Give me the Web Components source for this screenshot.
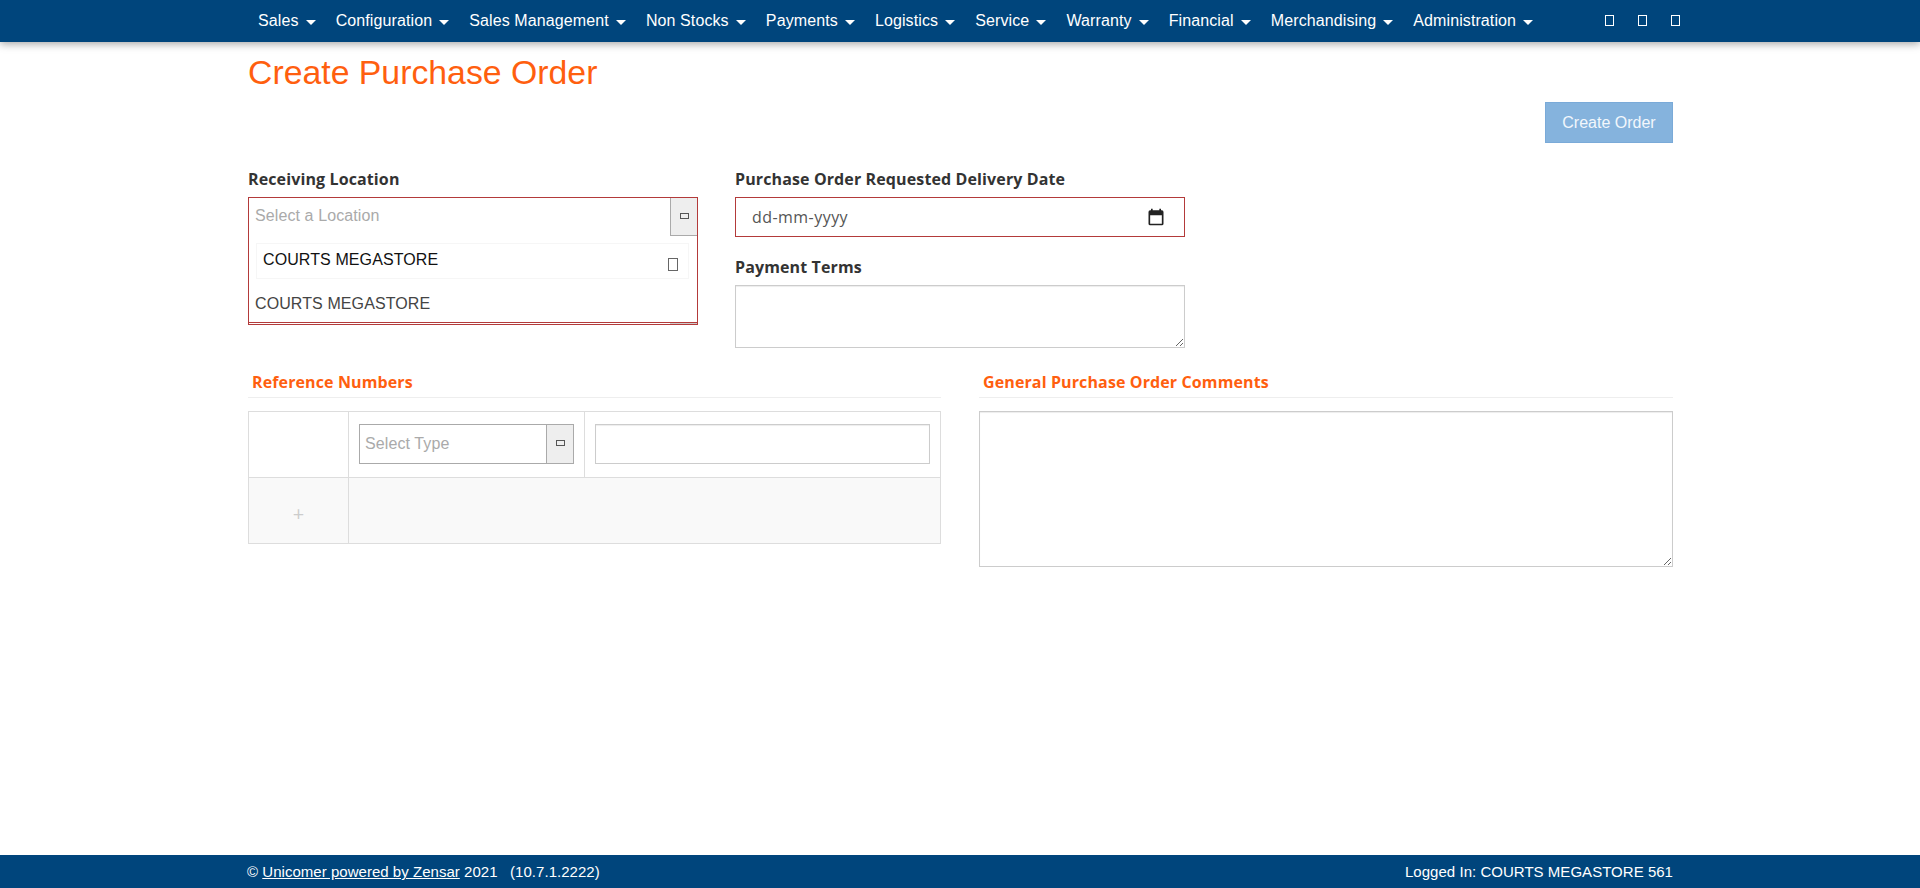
<!DOCTYPE html>
<html lang="en">
<head>
<meta charset="utf-8">
<title>Create Purchase Order</title>
<style>
  html, body { margin: 0; padding: 0; height: 100%; background: #fff; }
  body { font-family: "Liberation Sans", Arial, sans-serif; font-size: 16px; color: #333; display: flex; flex-direction: column; height: 888px; overflow: hidden; }
  app-footer a { color: #fff; text-decoration: underline; }
</style>
</head>
<body>
<template id="tofu-tpl">
  <style>
    :host { display: inline-block; flex: none; width: var(--w, 9px); height: var(--h, 11px); box-sizing: border-box; border: 1px solid currentColor; }
  </style>
</template>

<app-nav>
  <nav-item>Sales</nav-item>
  <nav-item>Configuration</nav-item>
  <nav-item>Sales Management</nav-item>
  <nav-item>Non Stocks</nav-item>
  <nav-item>Payments</nav-item>
  <nav-item>Logistics</nav-item>
  <nav-item>Service</nav-item>
  <nav-item>Warranty</nav-item>
  <nav-item>Financial</nav-item>
  <nav-item>Merchandising</nav-item>
  <nav-item>Administration</nav-item>
</app-nav>

<po-page></po-page>

<app-footer>
  <span slot="left">© <a href="#">Unicomer powered by Zensar</a> 2021 &nbsp; (10.7.1.2222)</span>
  <span slot="right">Logged In: COURTS MEGASTORE 561</span>
</app-footer>

<script>
class TofuIcon extends HTMLElement {
  constructor() {
    super();
    this.attachShadow({ mode: 'open' });
    this.shadowRoot.appendChild(document.getElementById('tofu-tpl').content.cloneNode(true));
  }
}
customElements.define('tofu-icon', TofuIcon);

class NavItem extends HTMLElement {
  constructor() {
    super();
    this.attachShadow({ mode: 'open' });
    this.shadowRoot.innerHTML = `
      <style>
        :host { display: flex; align-items: center; padding: 0 10px; height: 42px; color: #fff; white-space: nowrap; letter-spacing: .1px; }
        .caret { width: 0; height: 0; margin-left: 7.15px; margin-top: 2px; border-top: 5px solid #fff; border-left: 5px solid transparent; border-right: 5px solid transparent; }
      </style>
      <slot></slot><span class="caret"></span>
    `;
  }
}
customElements.define('nav-item', NavItem);

class AppNav extends HTMLElement {
  constructor() {
    super();
    this.attachShadow({ mode: 'open' });
    this.shadowRoot.innerHTML = `
      <style>
        :host { display: block; flex: none; height: 42px; background: #00457c; box-shadow: 0 2px 8px rgba(0,0,0,0.35); position: relative; z-index: 2; font: 16px "Liberation Sans", Arial, sans-serif; }
        .inner { display: flex; justify-content: space-between; margin: 0 232px 0 248px; height: 42px; }
        .menu { display: flex; }
        .tools { display: flex; align-items: center; gap: 24px; padding-bottom: 1px; color: #fff; width: 83px; }
      </style>
      <div class="inner">
        <div class="menu"><slot></slot></div>
        <div class="tools"><tofu-icon></tofu-icon><tofu-icon></tofu-icon><tofu-icon></tofu-icon></div>
      </div>
    `;
  }
}
customElements.define('app-nav', AppNav);

class FieldLabel extends HTMLElement {
  constructor() {
    super();
    this.attachShadow({ mode: 'open' });
    this.shadowRoot.innerHTML = `
      <style>
        :host { display: block; font: 700 16px/20px "Open Sans", sans-serif; letter-spacing: .12px; color: #333; margin-bottom: 8px; }
      </style>
      <slot></slot>
    `;
  }
}
customElements.define('field-label', FieldLabel);

class SectionHead extends HTMLElement {
  constructor() {
    super();
    this.attachShadow({ mode: 'open' });
    this.shadowRoot.innerHTML = `
      <style>
        :host { display: block; font: 700 16px/20px "Open Sans", sans-serif; letter-spacing: .12px; color: #ff5f0f; padding: 0 4px 5px; border-bottom: 1px solid #eee; margin-bottom: 13px; }
      </style>
      <slot></slot>
    `;
  }
}
customElements.define('section-head', SectionHead);

class ComboBox extends HTMLElement {
  constructor() {
    super();
    this.attachShadow({ mode: 'open' });
    this.shadowRoot.innerHTML = `
      <style>
        :host { display: flex; box-sizing: border-box; height: 40px; border: 1px solid #aaa; background: #fff; font: 16px "Liberation Sans", Arial, sans-serif; letter-spacing: .1px; }
        .text { flex: 1; padding: 0 5px; line-height: 38px; color: #aaa; }
        .btn { flex: none; box-sizing: border-box; width: 27px; background: #eee; border-left: 1px solid #aaa; display: flex; align-items: center; justify-content: center; color: #555; padding-bottom: 2px; }
      </style>
      <div class="text"><slot></slot></div>
      <div class="btn"><tofu-icon style="--w:9px;--h:6px"></tofu-icon></div>
    `;
  }
}
customElements.define('combo-box', ComboBox);

class LocationPicker extends HTMLElement {
  constructor() {
    super();
    this.attachShadow({ mode: 'open' });
    this.shadowRoot.innerHTML = `
      <style>
        :host { display: block; box-sizing: border-box; height: 128px; border: 1px solid #b33a3a; position: relative; background: #fff; font: 16px "Liberation Sans", Arial, sans-serif; letter-spacing: .1px; }
        .drop { position: absolute; left: 0; right: 0; top: 0; bottom: 1px; border-bottom: 1px solid #b33a3a; background: #fff; }
        .tail { position: absolute; right: 0; bottom: 0; width: 27px; height: 1px; background: #ccc; }
        .head { display: flex; height: 38px; }
        .ph { flex: 1; padding: 0 6px; line-height: 36px; color: #aaa; }
        .btn { flex: none; box-sizing: border-box; width: 27px; background: #eee; border-left: 1px solid #aaa; border-bottom: 1px solid #aaa; display: flex; align-items: center; justify-content: center; color: #555; padding-bottom: 1px; }
        .chosen { display: flex; justify-content: space-between; align-items: center; box-sizing: border-box; height: 36px; margin: 7px 8px 0 7px; padding: 0 10px 0 6px; border: 1px solid #f6f6f6; color: #111; }
        .chosen span { padding-bottom: 3px; }
        .chosen tofu-icon { color: #666; margin-top: 6px; }
        .opt { padding: 0 6px; margin-top: 7px; line-height: 36px; color: #444; }
      </style>
      <div class="drop">
        <div class="head">
          <div class="ph">Select a Location</div>
          <div class="btn"><tofu-icon style="--w:9px;--h:6px"></tofu-icon></div>
        </div>
        <div class="chosen"><span>COURTS MEGASTORE</span><tofu-icon style="--w:10px;--h:13px"></tofu-icon></div>
        <div class="opt">COURTS MEGASTORE</div>
      </div>
      <div class="tail"></div>
    `;
  }
}
customElements.define('location-picker', LocationPicker);

class DateField extends HTMLElement {
  constructor() {
    super();
    this.attachShadow({ mode: 'open' });
    this.shadowRoot.innerHTML = `
      <style>
        :host { display: flex; align-items: center; justify-content: space-between; box-sizing: border-box; height: 40px; padding: 0 18px 0 16px; border: 1px solid #b33a3a; background: #fff; font: 16px "Open Sans", sans-serif; color: #555; letter-spacing: .45px; }
        span { margin-top: -1px; }
        svg { display: block; width: 20px; height: 20px; margin-top: -1px; }
      </style>
      <span>dd-mm-yyyy</span>
      <svg viewBox="0 0 18 18" fill="#222"><path d="M14.25 3H13.5V1.5H12V3H6V1.5H4.5V3H3.75A1.5 1.5 0 0 0 2.25 4.5V15A1.5 1.5 0 0 0 3.75 16.5H14.25A1.5 1.5 0 0 0 15.75 15V4.5A1.5 1.5 0 0 0 14.25 3ZM14.25 15H3.75V7.5H14.25Z"/></svg>
    `;
  }
}
customElements.define('date-field', DateField);

class TextBox extends HTMLElement {
  constructor() {
    super();
    this.attachShadow({ mode: 'open' });
    this.shadowRoot.innerHTML = `
      <style>
        :host { display: block; height: var(--box-h, 63px); }
        textarea { display: block; box-sizing: border-box; width: 100%; height: 100%; margin: 0; border: 1px solid #ccc; border-radius: 0; outline: 0; background: #fff; box-shadow: inset 0 1px 1px rgba(0,0,0,.075); }
      </style>
      <textarea></textarea>
    `;
  }
}
customElements.define('text-box', TextBox);

class RefTable extends HTMLElement {
  constructor() {
    super();
    this.attachShadow({ mode: 'open' });
    this.shadowRoot.innerHTML = `
      <style>
        :host { display: grid; grid-template-columns: 100px 236px 1fr; grid-template-rows: 65px 66px; box-sizing: border-box; border: 1px solid #ddd; }
        .cell { box-sizing: border-box; border-right: 1px solid #ddd; }
        .cell.last { border-right: 0; }
        .pad { padding: 12px 10px 0 10px; }
        .foot { background: #f9f9f9; border-top: 1px solid #ddd; }
        .add { display: flex; align-items: center; justify-content: center; color: #ccc; font: 20px "Open Sans", sans-serif; padding-top: 5px; }
        .wide { grid-column: 2 / 4; border-right: 0; }
        input { display: block; box-sizing: border-box; width: 100%; height: 40px; margin: 0; border: 1px solid #ccc; border-radius: 0; outline: 0; box-shadow: inset 0 1px 1px rgba(0,0,0,.075); }
      </style>
      <div class="cell"></div>
      <div class="cell pad"><combo-box>Select Type</combo-box></div>
      <div class="cell last pad"><input type="text"></div>
      <div class="cell foot add">+</div>
      <div class="cell foot wide"></div>
    `;
  }
}
customElements.define('ref-table', RefTable);

class PoPage extends HTMLElement {
  constructor() {
    super();
    this.attachShadow({ mode: 'open' });
    this.shadowRoot.innerHTML = `
      <style>
        :host { display: block; flex: 1; padding: 0 247px 0 248px; font: 16px "Liberation Sans", Arial, sans-serif; }
        h1 { margin: 0; padding-top: 9px; font: 400 33.8px/42px "Liberation Sans", Arial, sans-serif; color: #ff5f0f; }
        .actions { display: flex; justify-content: flex-end; margin-top: 9px; }
        button { box-sizing: border-box; width: 128px; height: 41px; background: #85b3dd; border: 1px solid #7aaad8; color: #f2f7fc; font: 16px "Liberation Sans", Arial, sans-serif; padding: 0; }
        .form { display: grid; grid-template-columns: 450px 450px; column-gap: 37px; margin-top: 26px; }
        .stack { display: flex; flex-direction: column; }
        .gap { margin-top: 20px; }
        .sections { display: grid; grid-template-columns: 693px 694px; column-gap: 38px; margin-top: 24px; }
      </style>
      <h1>Create Purchase Order</h1>
      <div class="actions"><button type="button">Create Order</button></div>
      <div class="form">
        <div class="stack">
          <field-label>Receiving Location</field-label>
          <location-picker></location-picker>
        </div>
        <div class="stack">
          <field-label>Purchase Order Requested Delivery Date</field-label>
          <date-field></date-field>
          <field-label class="gap">Payment Terms</field-label>
          <text-box></text-box>
        </div>
      </div>
      <div class="sections">
        <div>
          <section-head>Reference Numbers</section-head>
          <ref-table></ref-table>
        </div>
        <div>
          <section-head>General Purchase Order Comments</section-head>
          <text-box style="--box-h:156px"></text-box>
        </div>
      </div>
    `;
  }
}
customElements.define('po-page', PoPage);

class AppFooter extends HTMLElement {
  constructor() {
    super();
    this.attachShadow({ mode: 'open' });
    this.shadowRoot.innerHTML = `
      <style>
        :host { display: flex; flex: none; justify-content: space-between; align-items: center; height: 33px; padding: 0 247px 0 247px; background: #00457c; color: #fff; font: 15px "Liberation Sans", Arial, sans-serif; letter-spacing: .03px; }
        ::slotted(span) { white-space: nowrap; }
      </style>
      <slot name="left"></slot>
      <slot name="right"></slot>
    `;
  }
}
customElements.define('app-footer', AppFooter);
</script>
</body>
</html>
